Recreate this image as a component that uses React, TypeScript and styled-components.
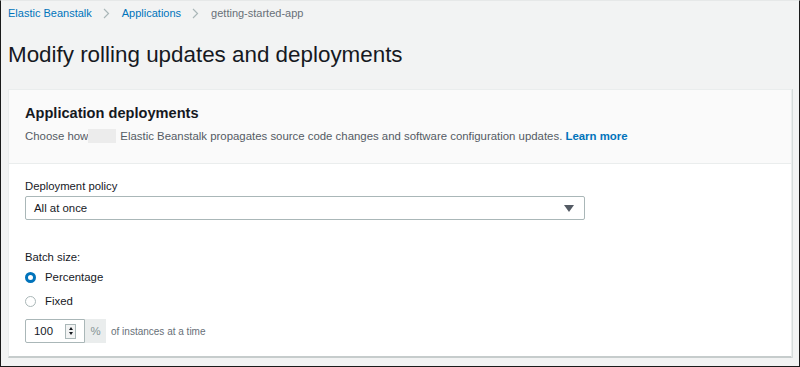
import React, { FC, useState } from "react";
import styled, { createGlobalStyle } from "styled-components";

const GlobalStyle = createGlobalStyle`
  html, body {
    margin: 0;
    padding: 0;
    background: #f2f3f3;
  }
  body {
    font-family: "Liberation Sans", Arial, sans-serif;
    color: #16191f;
  }
`;

const Frame = styled.div`
  box-sizing: border-box;
  width: 800px;
  height: 367px;
  border: 1px solid #1a1a1a;
  border-top-color: #e6e8e8;
  background: #f2f3f3;
  padding: 0 7px 0 7px;
  overflow: hidden;
`;

const Breadcrumbs = styled.nav`
  display: flex;
  align-items: center;
  height: 24px;
  font-size: 11px;
`;

const Crumb = styled.a<{ $current?: boolean }>`
  color: ${(p) => (p.$current ? "#687078" : "#0073bb")};
  text-decoration: none;
`;

const Sep = styled.span`
  color: #aab7b8;
  margin: 0 12px 0 11px;
  display: inline-flex;
`;

const Title = styled.h1`
  margin: 16px 0 0;
  font-size: 22.4px;
  font-weight: 400;
  line-height: 28px;
  color: #16191f;
`;

const Card = styled.section`
  margin-top: 20px;
  background: #fff;
  border: 1px solid #eaeded;
  border-bottom: 2px solid #c6cccc;
  box-shadow: 1px 0 0 #d5dbdb;
`;

const CardHeader = styled.header`
  background: #fafafa;
  border-bottom: 1px solid #eaeded;
  padding: 13px 16px 19px;
`;

const CardTitle = styled.h2`
  margin: 0;
  font-size: 14.6px;
  font-weight: 700;
  line-height: 20px;
`;

const Description = styled.p`
  margin: 5px 0 0;
  font-size: 11.4px;
  line-height: 16px;
  color: #545b64;
`;

const Redacted = styled.span`
  display: inline-block;
  width: 28px;
  height: 14px;
  background: #ececec;
  vertical-align: -3px;
  margin: 0 4px 0 0;
`;

const Learn = styled.a`
  color: #0073bb;
  font-weight: 700;
  text-decoration: none;
`;

const CardBody = styled.div`
  padding: 14px 16px 13px;
`;

const Label = styled.div`
  font-size: 11.3px;
  line-height: 16px;
  color: #16191f;
`;

const SelectBox = styled.div`
  box-sizing: border-box;
  margin-top: 2px;
  width: 560px;
  height: 24px;
  border: 1px solid #aab7b8;
  border-radius: 2px;
  display: flex;
  align-items: center;
  justify-content: space-between;
  padding: 0 10px 0 8px;
  font-size: 11.4px;
`;

const Caret = styled.span`
  width: 0;
  height: 0;
  border-left: 5px solid transparent;
  border-right: 5px solid transparent;
  border-top: 7px solid #545b64;
`;

const Group = styled.div`
  margin-top: 29px;
`;

const RadioRow = styled.label`
  display: flex;
  align-items: center;
  gap: 9px;
  height: 24px;
  font-size: 11.4px;
  cursor: pointer;
`;

const RadioDot = styled.span<{ $on: boolean }>`
  box-sizing: border-box;
  width: 11px;
  height: 11px;
  border-radius: 50%;
  border: ${(p) => (p.$on ? "3px solid #0073bb" : "1px solid #aab7b8")};
  background: #fff;
`;

const NumberRow = styled.div`
  display: flex;
  align-items: center;
  margin-top: 6px;
`;

const NumberBox = styled.div`
  box-sizing: border-box;
  width: 60px;
  height: 24px;
  border: 1px solid #aab7b8;
  border-radius: 2px 0 0 2px;
  display: flex;
  align-items: center;
  justify-content: space-between;
  padding: 0 8px 0 8px;
  font-size: 11.4px;
`;

const Spinner = styled.span`
  box-sizing: border-box;
  width: 11px;
  height: 15px;
  border: 1px solid #aab7b8;
  background: #f2f3f3;
  display: flex;
  flex-direction: column;
  align-items: center;
  justify-content: space-around;
  padding: 1px 0;
`;

const Tri = styled.span<{ $up?: boolean }>`
  width: 0;
  height: 0;
  border-left: 2.5px solid transparent;
  border-right: 2.5px solid transparent;
  ${(p) => (p.$up ? "border-bottom: 3px solid #16191f;" : "border-top: 3px solid #16191f;")}
`;

const Addon = styled.span`
  width: 21px;
  height: 24px;
  background: #eaeded;
  color: #879596;
  font-size: 11.4px;
  display: flex;
  align-items: center;
  justify-content: center;
`;

const Hint = styled.span`
  margin-left: 5px;
  font-size: 10px;
  color: #687078;
`;

const Chevron: FC = () => (
  <svg width="7" height="11" viewBox="0 0 7 11">
    <path d="M1 1l4.5 4.5L1 10" fill="none" stroke="#aab7b8" strokeWidth="1.2" />
  </svg>
);

const App: FC = () => {
  const [mode, setMode] = useState<"percentage" | "fixed">("percentage");

  return (
    <>
      <GlobalStyle />
      <Frame>
        <Breadcrumbs>
          <Crumb href="#">Elastic Beanstalk</Crumb>
          <Sep>
            <Chevron />
          </Sep>
          <Crumb href="#">Applications</Crumb>
          <Sep>
            <Chevron />
          </Sep>
          <Crumb $current>getting-started-app</Crumb>
        </Breadcrumbs>
        <Title>Modify rolling updates and deployments</Title>
        <Card>
          <CardHeader>
            <CardTitle>Application deployments</CardTitle>
            <Description>
              Choose how
              <Redacted />
              Elastic Beanstalk propagates source code changes and software configuration updates.{" "}
              <Learn href="#">Learn more</Learn>
            </Description>
          </CardHeader>
          <CardBody>
            <Label>Deployment policy</Label>
            <SelectBox>
              All at once
              <Caret />
            </SelectBox>
            <Group>
              <Label>Batch size:</Label>
              <RadioRow onClick={() => setMode("percentage")}>
                <RadioDot $on={mode === "percentage"} />
                Percentage
              </RadioRow>
              <RadioRow onClick={() => setMode("fixed")}>
                <RadioDot $on={mode === "fixed"} />
                Fixed
              </RadioRow>
              <NumberRow>
                <NumberBox>
                  100
                  <Spinner>
                    <Tri $up />
                    <Tri />
                  </Spinner>
                </NumberBox>
                <Addon>%</Addon>
                <Hint>of instances at a time</Hint>
              </NumberRow>
            </Group>
          </CardBody>
        </Card>
      </Frame>
    </>
  );
};

export default App;
